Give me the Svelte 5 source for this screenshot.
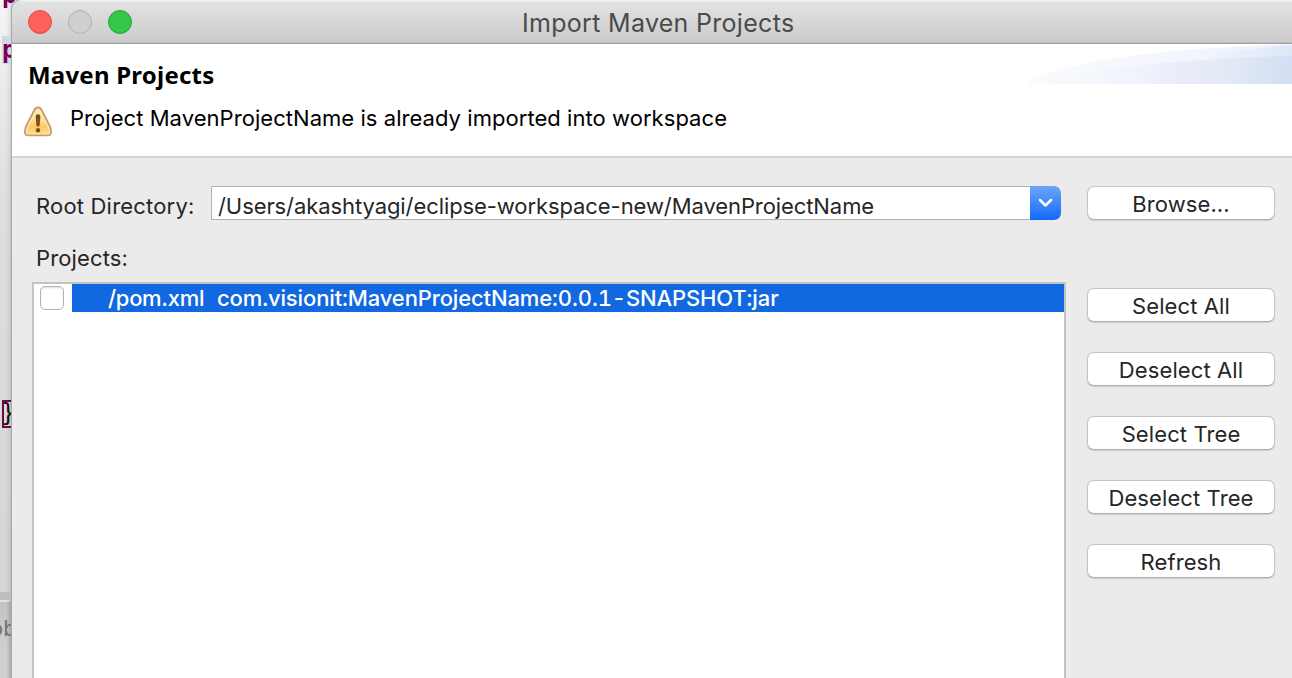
<script>
  const actions = ['Select All', 'Deselect All', 'Select Tree', 'Deselect Tree', 'Refresh'];
</script>

<div class="screen">
  <aside class="editor">
    <b class="kw first">p</b>
    <b class="kw second">p</b>
    <span class="brace">&#125;</span>
    <div class="panel"><span>ob</span></div>
  </aside>
  <section class="window">
    <header class="titlebar">
      <div class="lights"><i class="close"></i><i class="min"></i><i class="max"></i></div>
      <span class="title">Import Maven Projects</span>
    </header>
    <div class="banner">
      <div class="bannertext">
        <h1>Maven Projects</h1>
        <div class="message">
          <svg width="28" height="31" viewBox="0 0 28 31">
            <defs>
              <linearGradient id="warn" x1="0" y1="0" x2="0" y2="1">
                <stop offset="0" stop-color="#ffeabb" />
                <stop offset=".45" stop-color="#ffdc94" />
                <stop offset=".72" stop-color="#ffc660" />
                <stop offset="1" stop-color="#ffd88c" />
              </linearGradient>
            </defs>
            <path d="M14 .5C12 .5 10.600 1.700 9.600 3.600L1.200 20C.3 22 .1 24.300.1 26.500.1 28.800 1.700 30.200 4.200 30.200H23.800C26.300 30.200 27.900 28.800 27.900 26.500 27.900 24.300 27.700 22 26.800 20L18.400 3.600C17.400 1.700 16 .5 14 .5Z" fill="#c79b68" />
            <path d="M14 2.400C12.800 2.400 12 3.200 11.200 4.600L2.900 21C2.200 22.600 1.900 24.500 1.900 26.200 1.900 27.800 2.800 28.500 4.500 28.500H23.500C25.200 28.500 26.100 27.800 26.100 26.200 26.100 24.500 25.800 22.600 25.100 21L16.800 4.600C16 3.200 15.200 2.400 14 2.400Z" fill="#ffeac2" />
            <path d="M14 3.800C13.300 3.800 12.800 4.400 12.300 5.300L4.200 21.500C3.500 23 3.100 24.700 3.100 26 3.100 27.100 3.500 27.400 4.600 27.400H23.400C24.500 27.400 24.900 27.100 24.900 26 24.900 24.700 24.500 23 23.800 21.500L15.700 5.300C15.200 4.400 14.700 3.800 14 3.800Z" fill="url(#warn)" />
            <path d="M11.700 10.200q0-2 2.300-2t2.300 2l-.6 8.800q-.2 1.500-1.700 1.500t-1.700-1.500Z" fill="#79501c" />
            <circle cx="14" cy="24.200" r="2.200" fill="#79501c" />
          </svg>
          <span>Project MavenProjectName is already imported into workspace</span>
        </div>
      </div>
      <svg class="swoosh" width="268" height="40" viewBox="0 0 268 40">
        <defs>
          <linearGradient id="sa"><stop offset="0" stop-color="#fafbfd" /><stop offset=".55" stop-color="#f3f6fd" /><stop offset="1" stop-color="#edf2fc" /></linearGradient>
          <linearGradient id="sb" gradientUnits="userSpaceOnUse" x1="170" y1="0" x2="268" y2="0"><stop offset="0" stop-color="#f1f5fe" /><stop offset="1" stop-color="#dfe7f7" /></linearGradient>
          <linearGradient id="sc" gradientUnits="userSpaceOnUse" x1="2" y1="0" x2="268" y2="0"><stop offset="0" stop-color="#fafbfd" /><stop offset=".4" stop-color="#f0f4fc" /><stop offset=".56" stop-color="#eaedf8" /><stop offset=".78" stop-color="#e2e9f6" /><stop offset=".85" stop-color="#dbe5f5" /><stop offset="1" stop-color="#d4def3" /></linearGradient>
        </defs>
        <path d="M2 40C15 24 115 4 268 .5V40Z" fill="url(#sa)" />
        <path d="M130 24C180 13 220 4 268 1V40H130Z" fill="url(#sb)" />
        <path d="M2 40C45 28 150 15 268 12V40Z" fill="url(#sc)" />
      </svg>
    </div>
    <main>
      <div class="rootrow">
        <span class="label">Root Directory:</span>
        <div class="combo">
          <div class="field">/Users/akashtyagi/eclipse-workspace-new/MavenProjectName</div>
          <div class="drop"><svg width="15" height="10" viewBox="0 0 15 10"><path d="M2 2l5.500 5.500L13 2" fill="none" stroke="#fff" stroke-width="2.500" stroke-linecap="round" stroke-linejoin="round" /></svg></div>
        </div>
        <button>Browse...</button>
      </div>
      <div class="projects">Projects:</div>
      <div class="lower">
        <div class="list">
          <div class="item">
            <i class="check"></i>
            <div class="selected"><span class="pom">/pom.xml</span><span class="artifact">com.visionit:MavenProjectName:0.0.1-SNAPSHOT:jar</span></div>
          </div>
        </div>
        <div class="actions">
          {#each actions as action}
            <button>{action}</button>
          {/each}
        </div>
      </div>
    </main>
  </section>
</div>

<style>
  :global(body) { overflow: hidden; }
  .screen { width: 1292px; height: 678px; display: flex; overflow: hidden; font: 22px/28px Inter, sans-serif; color: #262626; background: #e8e8e8; white-space: nowrap; }
  .editor { position: relative; width: 12px; flex: none; background: linear-gradient(90deg, transparent 50%, #0001 85%, #0003), linear-gradient(#f4f4f4, #dedede 30%, #d3d3d3); }
  .kw { position: absolute; left: 2px; width: 10px; font: bold 24px/28px "DejaVu Sans Mono", monospace; color: #7a0052; overflow: hidden; }
  .first { top: -19px; width: 18px; }
  .second { top: 36px; background: #d0d9e8; }
  .brace { position: absolute; top: 400px; left: 2px; width: 10px; height: 28px; box-sizing: border-box; border: 2px solid #6b0848; border-right: 0; font: 24px/23px "DejaVu Sans Mono", monospace; color: #111; text-indent: -3px; overflow: hidden; }
  .panel { position: absolute; top: 592px; left: 0; width: 12px; height: 86px; box-sizing: border-box; overflow: hidden; border-top: 8px solid #bdbdbd; background: linear-gradient(90deg, transparent 50%, #0003), linear-gradient(#e3e3e3 0 2px, #c4c4c4 2px, #d0d0d0 50px); color: #747474; }
  .panel span { display: block; margin: 14px 0 0 -10px; }
  .window { flex: 1; display: flex; flex-direction: column; border-radius: 10px 0 0 0; overflow: hidden; background: #ebebeb; box-shadow: 0 0 0 1px #a8a8a8; z-index: 1; }
  .titlebar { height: 44px; flex: none; box-sizing: border-box; display: flex; background: linear-gradient(#f2f2f2 0 1px, #e2e2e2 2px, #cbcbcb); border-bottom: 1px solid #a0a0a0; box-shadow: inset 0 -1px #bdbdbd; }
  .lights { display: flex; gap: 16px; padding: 10px 0 0 16px; width: 494px; box-sizing: border-box; }
  .lights i { width: 24px; height: 24px; border-radius: 50%; box-sizing: border-box; border: 1px solid; }
  .lights .close { background: #ff5f5b; border-color: #e04845; }
  .lights .min { background: #cfcfcf; border-color: #b0b0b0; }
  .lights .max { background: #33c748; border-color: #27a137; }
  .title { font-size: 25px; line-height: 28px; padding-top: 9px; margin-left: 16px; color: #4b4b4b; letter-spacing: .3px; }
  .banner { height: 114px; box-sizing: border-box; background: #fff; border-bottom: 2px solid #d4d4d4; display: flex; justify-content: space-between; color: #000; }
  .bannertext { padding: 16px 0 0 12px; }
  h1 { margin: 0 0 0 4px; font: bold 24px/30px "Noto Sans", sans-serif; letter-spacing: .22px; }
  .message { display: flex; gap: 18px; margin-top: 14px; letter-spacing: .05px; }
  .message svg { margin-top: 2px; }
  .swoosh { flex: none; }
  main { padding: 28px 17px 0 20px; flex: 1; display: flex; flex-direction: column; }
  .rootrow { display: flex; height: 36px; }
  .label { width: 179px; box-sizing: border-box; padding: 6px 0 0 4px; letter-spacing: .19px; }
  .combo { width: 850px; height: 34px; display: flex; margin-right: 26px; }
  .field { flex: 1; box-sizing: border-box; height: 34px; background: #fff; border: 1px solid #b0b0b0; border-right: 0; padding: 5px 0 0 6px; letter-spacing: -.085px; }
  .drop { width: 31px; height: 34px; border-radius: 0 7px 7px 0; background: linear-gradient(#6da6f8, #1269fb); display: grid; place-items: center; }
  button { width: 188px; height: 34px; flex: none; box-sizing: border-box; border: 1px solid #c5c5c5; border-bottom-color: #b0b0b0; border-radius: 7px; background: #fff; box-shadow: 0 1px 1px #0002; font: inherit; color: inherit; letter-spacing: .1px; padding: 3px 0 1px; display: block; text-align: center; line-height: 28px; }
  .projects { height: 28px; margin: 22px 0 0 4px; letter-spacing: .14px; }
  .lower { display: flex; flex: 1; margin-top: 10px; }
  .list { width: 1034px; box-sizing: border-box; border: 2px solid #c3c3c3; border-bottom: 0; background: #fff; margin-right: 21px; }
  .item { display: flex; height: 28px; }
  .check { width: 24px; height: 24px; box-sizing: border-box; border: 1px solid #b5b5b5; border-radius: 5px; margin: 2px 8px 0 6px; box-shadow: inset 0 1px 2px #0002; }
  .selected { flex: 1; background: #1168e0; color: #fff; font-weight: 500; padding-left: 36px; display: flex; }
  .pom { width: 109px; letter-spacing: -.3px; }
  .artifact { letter-spacing: -.13px; font-variant-numeric: tabular-nums; }
  .actions { display: flex; flex-direction: column; gap: 30px; padding-top: 6px; }
</style>
